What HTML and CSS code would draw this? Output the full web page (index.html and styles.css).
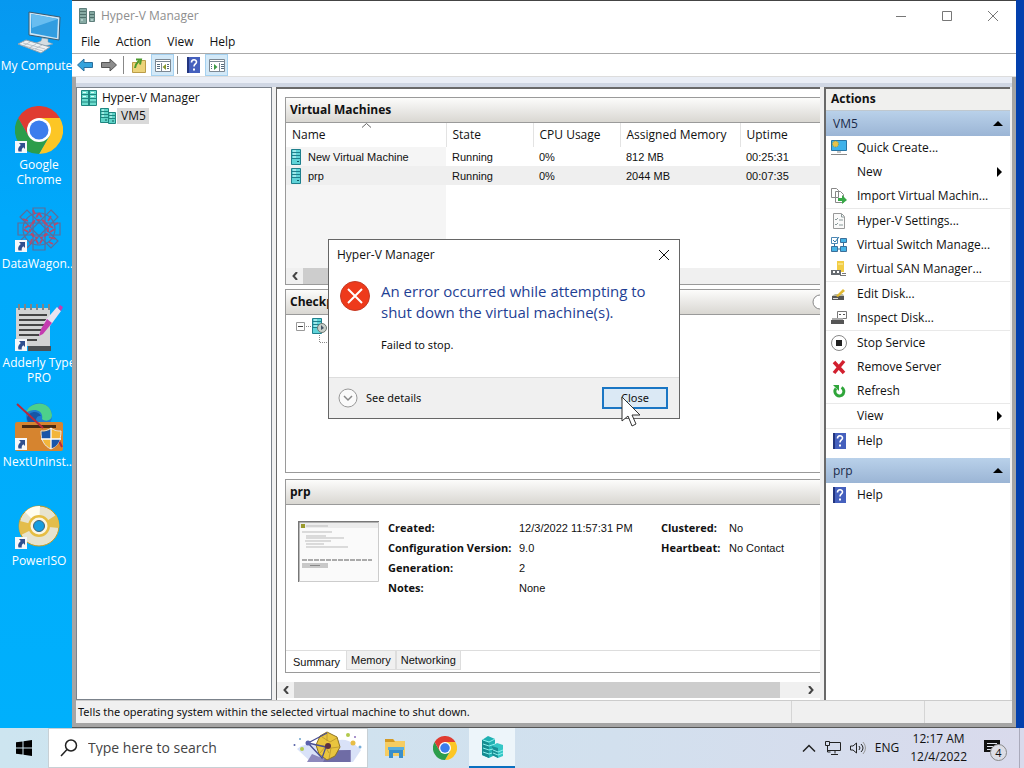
FILE: index.html
```html
<!DOCTYPE html>
<html lang="en">
<head>
  <meta charset="UTF-8">
  <meta name="viewport" content="width=device-width, initial-scale=1.0">
  <title>Hyper-V Manager</title>
  <link rel="stylesheet" href="styles.css">
</head>
<body>
  <!-- Shared icon shapes -->
  <svg class="sprite" aria-hidden="true">
    <symbol id="chrome" viewBox="0 0 48 48">
      <path d="M24 12h20.800A24 24 0 0 1 24 48l10.400-18z" fill="#fcc625"/>
      <path d="M13.600 30 3.200 12A24 24 0 0 0 24 48l10.400-18z" fill="#2c9d4b"/>
      <path d="M3.200 12A24 24 0 0 1 44.800 12H24L13.600 30z" fill="#e03c31"/>
      <circle cx="24" cy="24" r="12" fill="#fff"/>
      <circle cx="24" cy="24" r="9.500" fill="#3b7ded"/>
    </symbol>
    <symbol id="shortcut" viewBox="0 0 12 12">
      <path d="M0 0h12v12H0z" fill="#f5f7fa"/>
      <path d="M4 2h6v6L8.300 6.300C6.800 7.500 6.500 9 6.800 10.500H3.500C2.500 8 3.500 5.800 5.800 4z" fill="#2f4f8f"/>
    </symbol>
    <symbol id="help" viewBox="0 0 16 16">
      <path d="M2 0h13v16H2z" fill="#4560bd"/>
      <path d="M2 0h2v16H2z" fill="#22357f"/>
      <path d="M6.500 5.500c0-3.500 5-3.500 5-.5 0 2-2.500 2-2.500 4.500" fill="none" stroke="#fff" stroke-width="1.600"/>
      <path d="M8 11.500h2v2H8z" fill="#fff"/>
    </symbol>
    <symbol id="server" viewBox="0 0 10 16">
      <path d="M.5.500h9v15h-9z" fill="#5fd3d8" stroke="#1f7f8c"/>
      <path d="M1 3.500h8M1 6.500h8M1 9.500h8" stroke="#1f7f8c"/>
      <path d="M2 2h3M2 5h3M2 8h3" stroke="#dffcfc"/>
      <path d="M6 12h2v1H6z" fill="#0f5560"/>
    </symbol>
    <symbol id="servers" viewBox="0 0 16 16">
      <path d="M.5.500h8v14h-8zM8.500 4.500h7v11h-7z" fill="#5fd3c8" stroke="#1f8580"/>
      <path d="M1 3.500h7M1 6.500h7M1 9.500h7M9 7.500h6M9 10.500h6" stroke="#1f8580"/>
      <path d="M2 2h2M2 5h2M2 8h2M10 6h2M10 9h2" stroke="#e0fffb"/>
      <path d="M5 12h2M12 13h2" stroke="#0f5a58"/>
    </symbol>
  </svg>

  <main class="desktop">
    <nav class="shortcuts" aria-label="Desktop">
      <a href="#" class="shortcut">
        <svg class="shortcut-icon" viewBox="0 0 48 48">
          <path d="M14 5l31 5-1 23-30-5z" fill="#cfe6f5" stroke="#3b5a70"/>
          <path d="M16 7l27 5-1 19-26-5z" fill="#329de0"/>
          <path d="M16 7l27 5-26 9z" fill="#68bdf0"/>
          <path d="M27 31l6 1v3l5 2-8 2-9-3 5-2z" fill="#d5dde2" stroke="#8a9aa6" stroke-width=".5"/>
          <path d="M3 37l8-4 24 7-9 6z" fill="#eef1f3" stroke="#8fa0ad"/>
          <path d="M8 36l22 6M6 38l22 6M15 35l-7 4M21 37l-7 4M27 38l-7 4" stroke="#a6b2bb" stroke-width=".7"/>
        </svg>
        <span>My Computer</span>
      </a>
      <a href="#" class="shortcut">
        <svg class="shortcut-icon" viewBox="0 0 48 48"><use href="#chrome"/><use href="#shortcut" y="35" width="12" height="12"/></svg>
        <span>Google<br>Chrome</span>
      </a>
      <a href="#" class="shortcut">
        <svg class="shortcut-icon" viewBox="0 0 48 48">
          <g fill="none" stroke="#5f6c98" stroke-width="1.200">
            <path d="M18 3h12v42H18zM3 18h42v12H3z"/>
            <path d="M5 12l7-7 31 31-7 7zM36 5l7 7-31 31-7-7z"/>
            <circle cx="24" cy="24" r="16"/>
          </g>
          <g fill="none" stroke="#b8496b" stroke-width="1.800">
            <path d="M24 8l6 10 10 6-10 6-6 10-6-10-10-6 10-6z" stroke-dasharray="5 3"/>
            <circle cx="24" cy="24" r="9" stroke-dasharray="3 2"/>
            <path d="M8 14l5 2M36 11l-3 5M40 34l-6-2M15 39l2-5M18 5l2 4M43 18l-4 2M34 37l4 2"/>
          </g>
          <use href="#shortcut" y="35" width="12" height="12"/>
        </svg>
        <span>DataWagon...</span>
      </a>
      <a href="#" class="shortcut">
        <svg class="shortcut-icon" viewBox="0 0 48 48">
          <path d="M1 4h34v38H1z" fill="#d2d3d3"/>
          <path d="M13 42h23v5H13z" fill="#4c5053"/>
          <path d="M4 0v6M10 0v6M16 0v6M22 0v6M28 0v6M34 0v6" stroke="#7d8588" stroke-width="2"/>
          <path d="M4 11h28M4 16h27M4 21h25M4 26h22M4 31h20M12 36h10" stroke="#454545" stroke-width="2"/>
          <path d="M42 3l4 4-11 15-6-4z" fill="#e8e3ef"/>
          <path d="M45 1l3 2-2 4-3-3zM32 15l5 4-9 11-4 2 2-7z" fill="#c43ab0"/>
          <use href="#shortcut" y="35" width="12" height="12"/>
        </svg>
        <span>Adderly Type<br>PRO</span>
      </a>
      <a href="#" class="shortcut">
        <svg class="shortcut-icon" viewBox="0 0 48 48">
          <circle cx="24" cy="13" r="13" fill="#1f7fd0"/>
          <path d="M11 10C14-2 35-4 37 12c0 6-7 7-10 4 2-8-8-12-16-6z" fill="#4dd08b"/>
          <path d="M12 15c2-7 11-8 14-2-6-1-6 6-3 11-7 0-11-4-11-9z" fill="#1656a6"/>
          <rect y="19" width="48" height="29" rx="2" fill="#d6842f"/>
          <path d="M7 22h34v3H7z" fill="#4a2a12"/>
          <path d="M2 1l26 24M44 38l3 6" stroke="#b8293c" stroke-width="2"/>
          <path d="M36 25c4 3 7 3 10 3 0 9-3 15-10 18-7-3-10-9-10-18 3 0 6 0 10-3z" fill="#f3b53a" stroke="#e8e8e8"/>
          <path d="M36 26v10h-9l-.5-7.500C30 28.500 33 28 36 26zM36 36h9c-1 4-4 8-9 9.500z" fill="#1a55a8"/>
          <path d="M36 25v21M26 36h20" stroke="#fff" stroke-width="1.300"/>
          <use href="#shortcut" y="35" width="12" height="12"/>
        </svg>
        <span>NextUninst...</span>
      </a>
      <a href="#" class="shortcut">
        <svg class="shortcut-icon" viewBox="0 0 48 48">
          <circle cx="24" cy="24" r="20" fill="#e7e3cf" stroke="#c39b22"/>
          <path d="M24 24L6 33A20 20 0 0 1 5 19zM24 24l17-11A20 20 0 0 1 44 26z" fill="#e3bd4c"/>
          <path d="M24 24L10 10A20 20 0 0 1 25 4z" fill="#fffdf0"/>
          <circle cx="24" cy="24" r="11" fill="#e6bd42"/>
          <circle cx="24" cy="24" r="8.500" fill="#fbf6e4"/>
          <circle cx="24" cy="24" r="5.500" fill="#159ee0" stroke="#3f6075"/>
          <use href="#shortcut" y="35" width="12" height="12"/>
        </svg>
        <span>PowerISO</span>
      </a>
    </nav>

    <section class="window">
      <header class="title-bar">
        <svg class="title-icon" width="17" height="16" viewBox="0 0 17 16">
          <path d="M.5.500h7v15h-7zM10.500 3.500h5v10h-5z" fill="#86aaa3" stroke="#5f7f7c"/>
          <path d="M1 3.500h6M1 6.500h6M1 9.500h6M11 6.500h4M11 9.500h4" stroke="#4f706c"/>
          <path d="M2 12h2M12 12h2" stroke="#d8eeee"/>
        </svg>
        <h1>Hyper-V Manager</h1>
        <div class="window-buttons">
          <button aria-label="Minimize"><svg width="12" height="12"><path d="M1 6.500h10"/></svg></button>
          <button aria-label="Maximize"><svg width="12" height="12"><path d="M1.500 1.500h9v9h-9z"/></svg></button>
          <button aria-label="Close window"><svg width="12" height="12"><path d="M1 1l10 10M11 1L1 11"/></svg></button>
        </div>
      </header>
      <nav class="menu-bar">
        <button>File</button>
        <button>Action</button>
        <button>View</button>
        <button>Help</button>
      </nav>
      <div class="toolbar">
        <button aria-label="Back"><svg width="16" height="16" viewBox="0 0 16 16"><path d="M.5 8L7 2v3.500h8.500v5H7V14z" fill="#35a3dc" stroke="#2a6e9c"/></svg></button>
        <button aria-label="Forward"><svg width="16" height="16" viewBox="0 0 16 16"><path d="M15.500 8L9 2v3.500H.5v5H9V14z" fill="#8c8c8c" stroke="#555"/></svg></button>
        <i class="divider"></i>
        <button aria-label="Up one level"><svg width="16" height="16" viewBox="0 0 16 16"><path d="M1.500 5.500h5l1-2h7v12h-13z" fill="#ecd37a" stroke="#bb9c48"/><path d="M4 11c0-4 2-5 4-7M5 2.500h5l-1 5" fill="none" stroke="#4d9b2d" stroke-width="2"/></svg></button>
        <button class="pressed" aria-label="Show console tree"><svg width="16" height="16" viewBox="0 0 16 16"><path d="M.5 2.500h15v12H.5z" fill="#fff" stroke="#7c8893"/><path d="M1 4.500h14M6.500 6v8" stroke="#7c8893"/><path d="M2 7.500h3M2 9.500h3M2 11.500h3M12 7.500h2M12 9.500h2M12 11.500h2" stroke="#556b7d"/><path d="M11 7v6L7.500 10z" fill="#86972a"/></svg></button>
        <i class="divider"></i>
        <button aria-label="Help contents"><svg width="16" height="16"><use href="#help"/></svg></button>
        <button class="pressed" aria-label="Show action pane"><svg width="16" height="16" viewBox="0 0 16 16"><path d="M.5 2.500h15v12H.5z" fill="#fff" stroke="#7c8893"/><path d="M1 4.500h14M10.500 6v8" stroke="#7c8893"/><path d="M12 7.500h3M12 9.500h3M12 11.500h3M2 7.500h1M2 9.500h1M2 11.500h1" stroke="#556b7d"/><path d="M5 7v6l3.500-3z" fill="#3d9a46"/></svg></button>
      </div>

      <div class="console">
        <aside class="tree">
          <ul>
            <li>
              <svg width="16" height="16" viewBox="0 0 16 16"><path d="M.5.500h15v15H.5z" fill="#6bdccd" stroke="#1f8580"/><path d="M8 0v16" stroke="#1f8580" stroke-width="2"/><path d="M1 4.500h14M1 8.500h14M1 12h14" stroke="#1f8580"/><path d="M2 2.500h3M2 6.500h3M10 2.500h3M10 6.500h3" stroke="#e0fffb"/></svg>
              <span>Hyper-V Manager</span>
            </li>
            <li class="child">
              <svg width="16" height="16"><use href="#servers"/></svg>
              <span class="current">VM5</span>
            </li>
          </ul>
        </aside>

        <div class="results">
          <section class="panel machines">
            <h2>Virtual Machines</h2>
            <table>
              <thead>
                <tr><th class="col-name">Name<svg class="sort" width="9" height="5"><path d="M0 4.500L4.500.5 9 4.500" fill="none" stroke="#666"/></svg></th><th class="col-state">State</th><th class="col-cpu">CPU Usage</th><th class="col-memory">Assigned Memory</th><th>Uptime</th></tr>
              </thead>
              <tbody>
                <tr><td><svg width="10" height="16"><use href="#server"/></svg>New Virtual Machine</td><td>Running</td><td>0%</td><td>812 MB</td><td>00:25:31</td></tr>
                <tr class="selected"><td><svg width="10" height="16"><use href="#server"/></svg>prp</td><td>Running</td><td>0%</td><td>2044 MB</td><td>00:07:35</td></tr>
              </tbody>
            </table>
            <div class="sorted-fill"></div>
            <div class="scrollbar">
              <button aria-label="Scroll machines left"><svg width="6" height="8"><path d="M5 0L1.500 4 5 8"/></svg></button>
              <div class="thumb short"></div>
            </div>
          </section>

          <section class="panel checkpoints">
            <h2>Checkpoints<svg class="expander" width="16" height="16"><circle cx="8" cy="8" r="7" fill="#fff" stroke="#888"/></svg></h2>
            <svg class="checkpoint-tree" width="60" height="32" viewBox="0 0 60 32">
              <path d="M.5 7.500h8v8h-8z" fill="#fff" stroke="#999"/><path d="M2 11.500h5" stroke="#444"/>
              <path d="M10 11.500h6M23.500 20v7.500h30" fill="none" stroke="#888" stroke-dasharray="1 1"/>
              <use href="#server" x="16" y="3" width="10" height="16"/>
              <circle cx="26" cy="13" r="4.500" fill="#c7cfc9" stroke="#6e7a75"/><path d="M25 10v5l3-2z" fill="#456"/>
            </svg>
          </section>

          <section class="panel details">
            <h2>prp</h2>
            <div class="summary">
              <svg class="preview" width="81" height="61" viewBox="0 0 81 61">
                <path d="M0 0h81v61H0z" fill="#fafafa"/>
                <path d="M1 1h80v6H1z" fill="#ececec"/>
                <path d="M.5 61V.500H81" fill="none" stroke="#777" stroke-width="2"/>
                <path d="M80.500 1v59.500H1" fill="none" stroke="#ccc"/>
                <path d="M3 3h4v4H3z" fill="#9a9a2c"/>
                <path d="M8 5h22M4 11h30M8 15h20M8 17h38M7 20h26M8 23h18M8 26h42" stroke="#bbb"/>
                <path d="M4 39h70" stroke="#aaa" stroke-width="2" stroke-dasharray="5 1"/>
                <path d="M4 42h26v5H4z" fill="#c8c8c8"/><path d="M12 44.500h10" stroke="#888"/>
              </svg>
              <dl class="facts">
                <dt>Created:</dt><dd>12/3/2022 11:57:31 PM</dd>
                <dt>Configuration Version:</dt><dd>9.0</dd>
                <dt>Generation:</dt><dd>2</dd>
                <dt>Notes:</dt><dd>None</dd>
              </dl>
              <dl class="facts status">
                <dt>Clustered:</dt><dd>No</dd>
                <dt>Heartbeat:</dt><dd>No Contact</dd>
              </dl>
            </div>
            <div class="tabs">
              <button class="active">Summary</button>
              <button>Memory</button>
              <button>Networking</button>
            </div>
          </section>

          <div class="scrollbar outer">
            <button aria-label="Scroll left"><svg width="6" height="8"><path d="M5 0L1.500 4 5 8"/></svg></button>
            <div class="thumb"></div>
            <button class="end" aria-label="Scroll right"><svg width="6" height="8"><path d="M1 0L4.500 4 1 8"/></svg></button>
          </div>
        </div>

        <aside class="actions">
          <h2>Actions</h2>
          <h3>VM5 <svg width="10" height="5"><path d="M0 5L5 0l5 5z"/></svg></h3>
          <ul>
            <li><button><svg width="16" height="16" viewBox="0 0 16 16"><path d="M.5.500h15v10H.5z" fill="#3eb2ea" stroke="#2775a4"/><path d="M6 12h4M0 14.500h16" stroke="#888"/><circle cx="4.500" cy="4" r="3" fill="#e8c24a" stroke="#8a9a40" stroke-dasharray="1 1"/></svg>Quick Create...</button></li>
            <li><button><i class="blank"></i>New<svg class="more" width="5" height="10"><path d="M0 0l5 5-5 5z"/></svg></button></li>
            <li><button><svg width="16" height="16" viewBox="0 0 16 16"><path d="M.5.500h5l2 2v7h-7zM4.500 3.500h5l3 3v8h-8z" fill="#fff" stroke="#888"/><path d="M7 10h4V7l5 5-5 4v-3H7z" fill="#37a846"/></svg>Import Virtual Machin...</button></li>
            <li class="split"><button><svg width="16" height="16" viewBox="0 0 16 16"><path d="M2.500.500h8l3 3v12h-11z" fill="#fafafa" stroke="#999"/><path d="M4 6l1 1 2-2M4 11l1 1 2-2M8 7h4M8 12h4M10.500 1v3H13" fill="none" stroke="#8a9a9a"/></svg>Hyper-V Settings...</button></li>
            <li><button><svg width="16" height="16" viewBox="0 0 16 16"><path d="M9.500 1.500h6v4h-6zM.5 9.500h6v5h-6zM9.500 9.500h6v5h-6z" fill="#45b3e6" stroke="#3c6f99"/><path d="M.5.500h6v6h-6z" fill="#fff" stroke="#4a86b4"/><path d="M2 3l2 2 4-5M3.500 7v2M12.500 6v3M7 12h2" fill="none" stroke="#2b75a5"/></svg>Virtual Switch Manage...</button></li>
            <li><button><svg width="16" height="16" viewBox="0 0 16 16"><path d="M6 0h7v11H6z" fill="#f2cd45"/><path d="M7 3h5" stroke="#fff2b3"/><path d="M0 9h10v5H0z" fill="#666b70"/><path d="M2 10h2v2H2zM6 10h2v2H6z" fill="#fff"/><path d="M9 14.500h6M11 12.500h4" stroke="#777"/></svg>Virtual SAN Manager...</button></li>
            <li class="split"><button><svg width="16" height="16" viewBox="0 0 16 16"><path d="M1 10h12v4H1z" fill="#555"/><path d="M1 10l3-2h8l1 2z" fill="#b9b9a5"/><path d="M5 10l7-7 2 2-7 6z" fill="#e2b932"/><path d="M2 12.500h5" stroke="#ddd"/></svg>Edit Disk...</button></li>
            <li><button><svg width="16" height="16" viewBox="0 0 16 16"><path d="M6.500 1.500h9v7h-9z" fill="#fff" stroke="#777"/><path d="M8 4.500h2M12 4.500h2" stroke="#555"/><path d="M0 10h13v4H0z" fill="#555"/><path d="M1 8h11v2H1z" fill="#aaa"/></svg>Inspect Disk...</button></li>
            <li class="split"><button><svg width="16" height="16" viewBox="0 0 16 16"><circle cx="8" cy="8" r="7.500" fill="#fff" stroke="#888"/><path d="M5 5h6v6H5z" fill="#222"/></svg>Stop Service</button></li>
            <li><button><svg width="16" height="16" viewBox="0 0 16 16"><path d="M3 3l10 11M13 2L3 14" stroke="#d2202f" stroke-width="3.500"/></svg>Remove Server</button></li>
            <li><button><svg width="16" height="16" viewBox="0 0 16 16"><path d="M10.500 4.500a4.500 4.500 0 1 1-5.500 1" fill="none" stroke="#2fa53a" stroke-width="3"/><path d="M2 2h6v6z" fill="#2fa53a"/></svg>Refresh</button></li>
            <li class="split"><button><i class="blank"></i>View<svg class="more" width="5" height="10"><path d="M0 0l5 5-5 5z"/></svg></button></li>
            <li class="split"><button><svg width="16" height="16"><use href="#help"/></svg>Help</button></li>
          </ul>
          <h3>prp <svg width="10" height="5"><path d="M0 5L5 0l5 5z"/></svg></h3>
          <ul>
            <li><button><svg width="16" height="16"><use href="#help"/></svg>Help</button></li>
          </ul>
        </aside>
      </div>

      <footer class="status-bar">
        <span>Tells the operating system within the selected virtual machine to shut down.</span>
        <i class="status-cell"></i>
        <i class="status-cell"></i>
      </footer>
    </section>

    <!-- Error dialog over the console -->
    <section class="dialog" role="alertdialog" aria-labelledby="dialog-title">
      <header>
        <span id="dialog-title">Hyper-V Manager</span>
        <button aria-label="Close dialog"><svg width="12" height="12"><path d="M1 1l10 10M11 1L1 11" stroke="#111"/></svg></button>
      </header>
      <div class="message">
        <svg width="30" height="30" viewBox="0 0 30 30"><circle cx="15" cy="15" r="14.500" fill="#ee3a1b" stroke="#c43a25"/><path d="M8 8l14 14M22 8L8 22" stroke="#fff" stroke-width="2"/></svg>
        <div>
          <h2>An error occurred while attempting to shut down the virtual machine(s).</h2>
          <p>Failed to stop.</p>
        </div>
      </div>
      <footer>
        <button class="expand"><svg width="20" height="20" viewBox="0 0 20 20"><circle cx="10" cy="10" r="9" fill="#fafafa" stroke="#999"/><path d="M6 8l4 4 4-4" fill="none" stroke="#888" stroke-width="1.500"/></svg>See details</button>
        <button class="close">Close</button>
      </footer>
      <svg class="pointer" width="20" height="32" viewBox="0 0 20 32"><path d="M1 1v24l6-5 4 10 4-2-4-9h8z" fill="#fff" stroke="#333"/></svg>
    </section>
  </main>

  <footer class="taskbar">
    <button class="start" aria-label="Start"><svg width="16" height="16" viewBox="0 0 16 16"><path d="M0 2.300L6.500 1.400v6.100H0zM7.500 1.200L16 0v7.500H7.500zM0 8.500h6.500v6.100L0 13.700zM7.500 8.500H16V16l-8.500-1.200z"/></svg></button>
    <label class="search">
      <svg width="18" height="18" viewBox="0 0 18 18"><circle cx="11" cy="6.500" r="5.500" fill="none" stroke="#222" stroke-width="1.500"/><path d="M7 10.500L1 17" stroke="#222" stroke-width="1.500"/></svg>
      <input type="text" placeholder="Type here to search" aria-label="Search">
      <svg width="70" height="34" viewBox="0 0 70 34">
        <path d="M4 18c12-10 22 0 36-7s24 4 28 8l-8 12H18z" fill="#d9e2f8"/>
        <path d="M14 31l5-8 10 4 10-8h19v12z" fill="#8d89bd"/>
        <path d="M36 20l21-1v12H30z" fill="#6f6ca5"/>
        <path d="M34 1l10 5 3 10-5 9-8 4-8-6-3-9 4-9z" fill="#e9c53e" stroke="#8f7425"/>
        <path d="M29 6l8 5 7-4M24 14l8 1 4 7M46 16l-8 1-2 11M34 2v8M27 22l6-7" fill="none" stroke="#b8962e" stroke-width=".8"/>
        <path d="M15 12l18 4-4 11zM15 12L34 2" fill="none" stroke="#484e92" stroke-width="1.300"/>
        <circle cx="15" cy="12" r="2.500" fill="#5a61ac"/><circle cx="35" cy="15" r="3" fill="#5c3140"/>
        <circle cx="9" cy="18" r="2" fill="#b3c94c"/><circle cx="55" cy="4" r="2" fill="#b3c94c"/><circle cx="60" cy="12" r="2.500" fill="#e7bd45"/>
        <circle cx="1.500" cy="14" r="1" fill="#5560a5"/><circle cx="7" cy="8" r="1" fill="#6da2cb"/><circle cx="62" cy="6" r="1" fill="#8d70bd"/><circle cx="67" cy="16" r="1.500" fill="#78aed8"/>
      </svg>
    </label>
    <button class="task" aria-label="File Explorer"><svg width="24" height="24" viewBox="0 0 24 24"><path d="M2 3h8l2 2h10v15H2z" fill="#f6cd62"/><path d="M2 3h8l2 3H2z" fill="#d49a25"/><path d="M6 13h14v9h-4v-5h-6v5H6z" fill="#3a8fc9"/><path d="M5 11h16v3H5z" fill="#5aaedd"/></svg></button>
    <button class="task" aria-label="Google Chrome"><svg width="24" height="24"><use href="#chrome"/></svg></button>
    <button class="task running" aria-label="Hyper-V Manager task"><svg width="24" height="24" viewBox="0 0 24 24"><path d="M2 5l6-4 7 3v16l-6 3-7-3z" fill="#20b1b3"/><path d="M2 5l7 3v15l-7-3z" fill="#168b91"/><path d="M12 11l5-3 6 2v11l-5 2-6-3z" fill="#35c6c6"/><path d="M12 11l6 2v10l-6-3z" fill="#188f96"/><path d="M3 9l6 2 6-2M3 13l6 2 4-1M3 17l6 2 3-1M13 15l5 2 5-2M13 18l5 2 5-2M3 5l6 2 6-3" fill="none" stroke="#8df0ec"/></svg></button>
    <div class="tray">
      <button aria-label="Show hidden icons"><svg width="14" height="8"><path d="M1 7.500l6-6 6 6" fill="none" stroke="#222" stroke-width="1.500"/></svg></button>
      <button aria-label="Network"><svg width="16" height="14" viewBox="0 0 16 14"><path d="M4.500 1.500h11v8H3M10 9.500v3M6 13.500h7M.5.500h4v4h-4zM2.500 5v6h3" fill="none" stroke="#222"/></svg></button>
      <button aria-label="Volume"><svg width="16" height="14" viewBox="0 0 16 14"><path d="M.5 5v4H3l3.500 3V2L3 5zM9 5q2 2 0 4M11 3q4 4 0 8" fill="none" stroke="#222"/><path d="M13 1q5 6 0 12" fill="none" stroke="#999"/></svg></button>
      <button>ENG</button>
      <time class="clock">12:17 AM<br>12/4/2022</time>
      <button class="notices" aria-label="Notifications"><svg width="18" height="18" viewBox="0 0 18 18"><path d="M1 1h16v12h-5v4l-4-4H1z" fill="#111"/><path d="M4 4.500h10M4 7.500h10M4 10.500h6" stroke="#dfe3ec"/></svg><span class="badge">4</span></button>
      <i class="show-desktop"></i>
    </div>
  </footer>
</body>
</html>
```
FILE: styles.css
```css
* {
  box-sizing: border-box;
}

body {
  display: flex;
  flex-direction: column;
  height: 100vh;
  margin: 0;
  overflow: hidden;
  font-family: "Open Sans", "Noto Sans", sans-serif;
  font-size: 12px;
  line-height: 16px;
  color: #111;
  white-space: nowrap;
}

h1, h2, h3, p, ul, dl, dd {
  margin: 0;
  padding: 0;
  font-size: 12px;
}

ul {
  list-style: none;
}

button, input {
  padding: 0;
  border: none;
  background: none;
  font: inherit;
  color: inherit;
}

svg {
  display: block;
  flex: none;
}

.sprite {
  position: absolute;
  width: 0;
  height: 0;
}

/* Desktop */
.desktop {
  position: relative;
  display: flex;
  flex: 1;
  min-height: 0;
  padding-right: 8px;
  background: #0340ad;
}

.shortcuts {
  display: flex;
  flex-direction: column;
  width: 72px;
  overflow: hidden;
  padding-top: 7px;
  background: linear-gradient(#0698f0, #00a9fb 30%, #00b0fc);
}

.shortcut {
  display: flex;
  flex-direction: column;
  align-items: center;
  gap: 3px;
  width: 78px;
  height: 99px;
  color: #fff;
  text-align: center;
  text-decoration: none;
  line-height: 15px;
}

.shortcut-icon {
  width: 48px;
  height: 48px;
}

/* Main window */
.window {
  display: flex;
  flex: 1;
  flex-direction: column;
  min-width: 0;
  border-top: 1px solid #444;
  border-bottom: 1px solid #555;
  background: #a5a5a5;
}

.title-bar {
  display: flex;
  align-items: center;
  height: 29px;
  padding-left: 7px;
  background: #fff;
  color: #8e8e8e;
}

.title-bar h1 {
  flex: 1;
  margin-left: 5px;
  font-weight: normal;
}

.window-buttons {
  display: flex;
}

.window-buttons button {
  display: flex;
  justify-content: center;
  width: 46px;
}

.window-buttons path {
  fill: none;
  stroke: #777;
}

.menu-bar {
  display: flex;
  gap: 16px;
  height: 24px;
  padding-left: 9px;
  border-bottom: 1px solid #aaa;
  background: #fff;
}

.toolbar {
  display: flex;
  align-items: center;
  gap: 1px;
  height: 23px;
  padding-left: 1px;
  border-bottom: 1px solid #ddd;
  background: #fff;
}

.toolbar button {
  display: flex;
  align-items: center;
  justify-content: center;
  width: 23px;
  height: 22px;
}

.toolbar .pressed {
  border: 1px solid #a5d1f0;
  background: #d3e9f8;
}

.divider {
  width: 1px;
  height: 18px;
  margin: 0 2px;
  background: #888;
}

.console {
  display: flex;
  flex: 1;
  gap: 4px;
  min-height: 0;
  margin: 0 4px;
  padding: 10px 2px 0 0;
  background: linear-gradient(#eaeef6 0, #eaeef6 6px, #d0d7e4 6px, #d0d7e4 10px, #f0f0f0 10px);
}

/* Tree pane */
.tree {
  width: 196px;
  border: 1px solid #7b828b;
  background: #fff;
}

.tree ul {
  padding: 1px 0 0 4px;
}

.tree li {
  display: flex;
  align-items: center;
  gap: 5px;
  height: 18px;
}

.tree .child {
  padding-left: 19px;
  gap: 1px;
}

.current {
  padding: 0 3px 0 4px;
  background: #d9d9d9;
}

/* Results pane */
.results {
  display: flex;
  flex: 1;
  flex-direction: column;
  min-width: 0;
  padding: 8px 0 0 8px;
  border: solid #696969;
  border-width: 2px 0 0 1px;
  background: #fff;
}

.panel {
  display: flex;
  flex-direction: column;
  border: 1px solid #9a9a9a;
  border-right: none;
  overflow: hidden;
}

.panel h2 {
  flex: none;
  height: 25px;
  padding: 4px;
  border-bottom: 1px solid #9a9a9a;
  background: linear-gradient(#fcfcfb, #d9d7d2);
}

.machines {
  flex: none;
  height: 188px;
  margin-bottom: 4px;
}

.machines table {
  width: 100%;
  table-layout: fixed;
  border-collapse: collapse;
}

.machines th {
  height: 24px;
  padding: 0 0 0 6px;
  border-right: 1px solid #e3e3e3;
  font-weight: normal;
  text-align: left;
}

.machines th:last-child {
  border-right: none;
}

.col-name {
  position: relative;
  width: 160px;
}

.col-state, .col-cpu {
  width: 87px;
}

.col-memory {
  width: 120px;
}

.sort {
  position: absolute;
  top: 0;
  left: 76px;
}

.machines td {
  height: 19px;
  padding: 0 0 0 6px;
  font-family: "Liberation Sans", Arial, sans-serif;
  font-size: 11px;
}

.machines td:first-child {
  padding-left: 5px;
  background: #f5f5f5;
}

.machines td svg {
  display: inline-block;
  margin-right: 7px;
  vertical-align: bottom;
}

.machines .selected td {
  background: #efefef;
}

.sorted-fill {
  flex: 1;
  width: 160px;
  background: #f5f5f5;
}

.scrollbar {
  display: flex;
  align-items: center;
  flex: none;
  height: 16px;
  background: #f0f0f0;
}

.scrollbar button {
  display: flex;
  justify-content: center;
  width: 17px;
}

.scrollbar path {
  fill: none;
  stroke: #444;
  stroke-width: 2;
}

.thumb {
  flex: 1;
  height: 100%;
  background: #cdcdcd;
}

.thumb.short {
  flex: 0 1 320px;
}

.checkpoints {
  flex: 184 1 0;
  margin-bottom: 6px;
}

.checkpoints h2 {
  display: flex;
  align-items: center;
  justify-content: space-between;
}

.expander {
  margin-right: -12px;
}

.checkpoint-tree {
  margin-left: 10px;
}

.details {
  flex: 194 1 0;
}

.summary {
  display: flex;
  flex: 1;
  padding: 13px 0 0 12px;
}

.preview {
  margin: 3px 9px 0 0;
}

.facts {
  display: grid;
  grid-template-columns: 131px 142px;
  grid-auto-rows: 20px;
  align-content: start;
  font-size: 11px;
  line-height: 20px;
}

.facts dt {
  font-weight: bold;
}

.facts dd {
  font-family: "Liberation Sans", Arial, sans-serif;
  font-size: 11px;
}

.status {
  grid-template-columns: 68px 80px;
}

.tabs {
  display: flex;
  height: 22px;
  border-top: 1px solid #ddd;
  font-family: "Liberation Sans", Arial, sans-serif;
  font-size: 11px;
}

.tabs button {
  height: 19px;
  padding: 0 4px;
  border: 1px solid #ddd;
  border-top: none;
  background: #f0f0f0;
}

.tabs .active {
  height: 22px;
  padding: 0 6px 0 7px;
  border: none;
  background: #fff;
}

.outer {
  margin: 9px 0 2px -8px;
}

.outer .end {
  width: 18px;
  margin-left: 22px;
}

/* Actions pane */
.actions {
  width: 186px;
  border: solid #696969;
  border-width: 2px 0 0 2px;
  background: #fff;
}

.actions h2 {
  height: 22px;
  padding: 2px 5px;
  border-bottom: 1px solid #bfc8cf;
  background: #f0f0ee;
}

.actions h3 {
  display: flex;
  align-items: center;
  justify-content: space-between;
  height: 25px;
  padding: 0 7px;
  background: linear-gradient(#b9d1ea, #9bb5d5);
  color: #1a2a4a;
  font-weight: normal;
}

.actions ul {
  padding-bottom: 5px;
}

.actions li button {
  display: flex;
  align-items: center;
  gap: 10px;
  width: 100%;
  height: 24px;
  padding: 0 8px 0 5px;
  text-align: left;
}

.actions .split {
  border-top: 1px solid #e9e9e9;
}

.actions .blank {
  width: 16px;
}

.actions .more {
  margin-left: auto;
}

.status-bar {
  display: flex;
  align-items: center;
  height: 23px;
  margin: 0 4px 4px;
  padding-left: 2px;
  border-top: 1px solid #ccc;
  background: #f0f0f0;
}

.status-bar span {
  flex: 1;
  font-family: "Noto Sans", sans-serif;
  font-size: 11px;
}

.status-cell {
  width: 133px;
  height: 22px;
  border-left: 1px solid #d5d5d5;
}

.status-cell:last-child {
  width: 88px;
}

/* Error dialog */
.dialog {
  position: absolute;
  top: 239px;
  left: 328px;
  display: flex;
  flex-direction: column;
  width: 352px;
  border: 1px solid #666;
  background: #fff;
}

.dialog header {
  display: flex;
  align-items: center;
  justify-content: space-between;
  height: 30px;
  padding: 0 9px 0 8px;
}

.message {
  display: flex;
  gap: 11px;
  height: 107px;
  padding: 11px 11px 0;
  white-space: normal;
}

.message h2 {
  color: #1f3f94;
  font-size: 15px;
  font-weight: normal;
  line-height: 21px;
}

.message p {
  margin-top: 14px;
  font-family: "Noto Sans", sans-serif;
  font-size: 11px;
}

.dialog footer {
  display: flex;
  align-items: center;
  justify-content: space-between;
  height: 41px;
  padding: 0 11px 0 9px;
  border-top: 1px solid #ddd;
  background: #f0f0f0;
  font-family: "Noto Sans", sans-serif;
  font-size: 11px;
}

.expand {
  display: flex;
  align-items: center;
  gap: 8px;
}

.close {
  width: 66px;
  height: 22px;
  border: 2px solid #1a76c4;
  background: #dbe9f5;
}

.pointer {
  position: absolute;
  top: 156px;
  left: 292px;
}

/* Taskbar */
.taskbar {
  display: flex;
  height: 40px;
  background: linear-gradient(90deg, #cde5f0, #d2e0ee 60%, #d9daec);
}

.taskbar button {
  display: flex;
  align-items: center;
  justify-content: center;
}

.start {
  width: 48px;
}

.search {
  display: flex;
  align-items: center;
  width: 320px;
  padding: 0 4px 0 11px;
  border: 1px solid #c8d0d5;
  background: #fff;
}

.search input {
  flex: 1;
  min-width: 0;
  margin-left: 10px;
  font-size: 14px;
}

.search input::placeholder {
  color: #444;
  opacity: 1;
}

.task {
  width: 46px;
  margin-left: 4px;
}

.running {
  margin-left: 1px;
  border-bottom: 2px solid #0a70c0;
  background: #edf5fa;
}

.tray {
  display: flex;
  align-items: center;
  gap: 9px;
  margin-left: auto;
}

.clock {
  margin-left: 2px;
  line-height: 18px;
  text-align: center;
}

.notices {
  position: relative;
  margin: 0 9px 0 7px;
}

.badge {
  position: absolute;
  top: 5px;
  left: 7px;
  width: 17px;
  height: 17px;
  border: 1px solid #888;
  border-radius: 50%;
  background: #dcdde5;
  font-size: 11px;
  line-height: 15px;
}

.show-desktop {
  width: 5px;
  height: 40px;
  border-left: 1px solid #aab;
}
```
